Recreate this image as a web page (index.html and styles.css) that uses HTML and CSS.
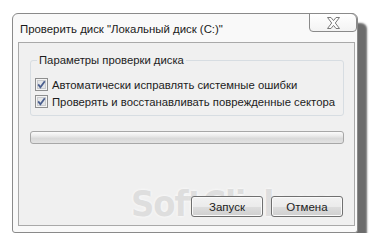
FILE: index.html
```html
<!DOCTYPE html>
<html lang="ru">
<head>
<meta charset="utf-8">
<title>Проверить диск</title>
<link rel="stylesheet" href="styles.css">
</head>
<body>
<div class="window">
  <div class="titlebar">
    <span class="title">Проверить диск "Локальный диск (C:)"</span>
    <button class="close" type="button" aria-label="Закрыть">
      <svg width="15" height="12" viewBox="0 0 15 12"><path d="M1.5 0.5 H5 L7.5 3.6 L10 0.5 H13.5 L9.3 6 L13.5 11.5 H10 L7.5 8.4 L5 11.5 H1.5 L5.7 6 Z" fill="#fdfdfd" stroke="#7a7a7a" stroke-width="1" stroke-linejoin="round"/></svg>
    </button>
  </div>
  <div class="client">
    <fieldset class="group">
      <legend class="legend">Параметры проверки диска</legend>
      <label class="row"><span class="check"><svg width="13" height="13" viewBox="0 0 13 13"><rect x="0.5" y="0.5" width="12" height="12" fill="#f4f4f4" stroke="#8e8f8f"/><rect x="2.5" y="2.5" width="8" height="8" fill="#e4e6e8" stroke="#c9cbce"/><path d="M3.2 6.4 L5.4 9.2 L9.8 3.2" fill="none" stroke="#4b5f8e" stroke-width="1.8"/></svg></span>Автоматически исправлять системные ошибки</label>
      <label class="row"><span class="check"><svg width="13" height="13" viewBox="0 0 13 13"><rect x="0.5" y="0.5" width="12" height="12" fill="#f4f4f4" stroke="#8e8f8f"/><rect x="2.5" y="2.5" width="8" height="8" fill="#e4e6e8" stroke="#c9cbce"/><path d="M3.2 6.4 L5.4 9.2 L9.8 3.2" fill="none" stroke="#4b5f8e" stroke-width="1.8"/></svg></span>Проверять и восстанавливать поврежденные сектора</label>
    </fieldset>
    <div class="progress"></div>
    <div class="watermark">SoftClick.ru</div>
    <div class="buttons">
      <button class="btn" type="button">Запуск</button>
      <button class="btn" type="button">Отмена</button>
    </div>
  </div>
</div>
</body>
</html>
```

FILE: styles.css
```css
html, body {
  margin: 0;
  padding: 0;
  background: #ffffff;
}
body {
  font-family: "Liberation Sans", Arial, sans-serif;
  font-size: 11.3px;
  color: #1c1c1c;
  padding: 13px 0 0 12px;
}
.window {
  box-sizing: border-box;
  width: 346px;
  height: 220px;
  border: 1px solid #8a8a8a;
  border-radius: 6px 6px 3px 3px;
  background: #f9f9f9;
  box-shadow: 9px 10px 2px #6c6c6c;
  padding: 0 2px 6px 5px;
  display: flex;
  flex-direction: column;
}
.titlebar {
  height: 28px;
  display: flex;
  align-items: flex-start;
}
.title {
  padding: 9px 0 0 2px;
  font-size: 11.4px;
  color: #1a1a1a;
}
.close {
  margin: -1px -2px 0 auto;
  width: 48px;
  height: 19px;
  padding: 0;
  box-sizing: border-box;
  border: 1px solid #8a8a8a;
  border-radius: 0 6px 4px 4px;
  background: linear-gradient(#ffffff, #f3f3f3);
  display: flex;
  align-items: center;
  justify-content: center;
}
.client {
  flex: 1;
  position: relative;
  border: 1px solid #a9a9a9;
  background: #f0f0f0;
  padding: 10px 10px 0 11px;
  display: flex;
  flex-direction: column;
}
.group {
  margin: 0;
  border: 1px solid #d7dde2;
  border-radius: 3px;
  padding: 1px 4px 5px 4px;
  min-width: 0;
}
.legend {
  padding: 0 2px;
  margin-left: 2px;
  line-height: 14px;
  color: #1c1c1c;
}
.row {
  display: flex;
  align-items: center;
  height: 17px;
  gap: 4px;
  white-space: nowrap;
}
.row:first-of-type {
  margin-top: 8px;
}
.check {
  width: 13px;
  height: 13px;
  display: flex;
}
.progress {
  margin-top: 15px;
  height: 13px;
  border: 1px solid #a7a7a7;
  border-radius: 3px;
  background: linear-gradient(#fbfbfb, #ebebeb 35%, #d9d9d9 60%, #e3e3e3);
  box-sizing: border-box;
}
.watermark {
  position: absolute;
  left: 112px;
  top: 143px;
  font-family: "DejaVu Sans Condensed", "Liberation Sans", sans-serif;
  font-weight: bold;
  font-size: 36px;
  line-height: 36px;
  color: #dedede;
  text-shadow: 0 0 3px #ffffff;
  letter-spacing: -1px;
  white-space: nowrap;
}
.buttons {
  margin-top: auto;
  margin-bottom: 8px;
  display: flex;
  justify-content: flex-end;
  gap: 8px;
  padding-right: 1px;
  position: relative;
}
.btn {
  width: 72px;
  height: 21px;
  box-sizing: border-box;
  border: 1px solid #707070;
  border-radius: 3px;
  background: linear-gradient(#f2f2f2, #ebebeb 50%, #dddddd 51%, #cfcfcf);
  box-shadow: inset 0 0 0 1px #fafafa;
  font-family: "Liberation Sans", Arial, sans-serif;
  font-size: 11.5px;
  color: #1c1c1c;
  padding: 0;
}
```
